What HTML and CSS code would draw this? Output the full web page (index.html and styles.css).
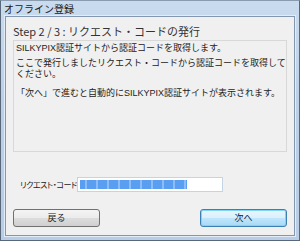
FILE: index.html
```html
<!DOCTYPE html>
<html>
<head>
<meta charset="utf-8">
<link rel="stylesheet" href="styles.css">
</head>
<body>
<div class="window">
  <div class="titlebar">オフライン登録</div>
  <div class="client">
    <div class="step">Step 2 / 3 : リクエスト・コードの発行</div>
    <div class="panel">
      <p class="line">SILKYPIX認証サイトから認証コードを取得します。</p>
      <p class="line two gap1">ここで発行しましたリクエスト・コードから認証コードを取得して<br>ください。</p>
      <p class="line gap2">「次へ」で進むと自動的にSILKYPIX認証サイトが表示されます。</p>
    </div>
    <div class="coderow">
      <span class="label">リクエスト・コード</span>
      <div class="input"><span class="sel"></span></div>
    </div>
    <div class="buttons">
      <div class="btn">戻る</div>
      <div class="btn default">次へ</div>
    </div>
  </div>
</div>
</body>
</html>
```
FILE: styles.css
```css
html, body {
  margin: 0;
  padding: 0;
  width: 300px;
  height: 241px;
  overflow: hidden;
  font-family: "Noto Sans CJK JP", "Noto Sans", sans-serif;
  color: #1e1e1e;
}
.window {
  box-sizing: border-box;
  width: 300px;
  height: 241px;
  border: 1px solid #58687a;
  border-top-color: #8a9bb0;
  background: linear-gradient(#c9dbee, #bcd1e8 40%, #b9cee6);
  display: flex;
  flex-direction: column;
}
.titlebar {
  height: 15px;
  padding-left: 3px;
  font-size: 10px;
  line-height: 15px;
  color: #1a1a1a;
}
.client {
  flex: 1;
  margin: 0 4px 4px 4px;
  border: 1px solid #8398b0;
  background: #f0f0f0;
  box-shadow: 0 0 0 1px #e3edf7;
  display: flex;
  flex-direction: column;
  padding: 0 7px 0 7px;
}
.step {
  font-size: 11px;
  line-height: 13px;
  margin-top: 8px;
  color: #333;
  white-space: nowrap;
}
.panel {
  margin-top: 2px;
  height: 112px;
  box-sizing: border-box;
  border: 1px solid #d8d8d8;
  padding: 2px 2px;
}
.line {
  margin: 0;
  font-family: "Liberation Sans", "Noto Sans CJK JP", sans-serif;
  font-size: 9px;
  line-height: 10px;
  color: #222;
  white-space: nowrap;
}
.line.two {
  line-height: 11px;
}
.line.gap1 {
  margin-top: 5px;
}
.line.gap2 {
  margin-top: 8px;
}
.coderow {
  display: flex;
  align-items: center;
  margin-top: 25px;
  padding-left: 7px;
}
.label {
  font-size: 8px;
  line-height: 10px;
  font-feature-settings: "palt";
  letter-spacing: -0.4px;
  white-space: nowrap;
  width: 57px;
  color: #222;
}
.input {
  width: 146px;
  height: 15px;
  box-sizing: border-box;
  border: 1px solid #c5d4e4;
  background: #fff;
  padding: 2px;
}
.sel {
  display: block;
  width: 107px;
  height: 9px;
  background:
    repeating-linear-gradient(90deg, rgba(255,255,255,0) 0 5px, rgba(190,220,255,0.5) 5px 7px, rgba(255,255,255,0) 7px 11px),
    #5a9ef2;
}
.buttons {
  display: flex;
  justify-content: space-between;
  margin-top: 17px;
}
.btn {
  width: 87px;
  height: 18px;
  box-sizing: border-box;
  border: 1px solid #707070;
  border-radius: 3px;
  background: linear-gradient(#f4f4f4, #ebebeb 50%, #dddddd 51%, #cfcfcf);
  font-size: 9px;
  line-height: 16px;
  text-align: center;
  color: #222;
}
.btn.default {
  border-color: #3c7fb1;
  box-shadow: inset 0 0 0 1px #7fd4f8;
  background: linear-gradient(#eaf6fd, #d9f0fc 50%, #bee6fd 51%, #a7d9f5);
}
```
